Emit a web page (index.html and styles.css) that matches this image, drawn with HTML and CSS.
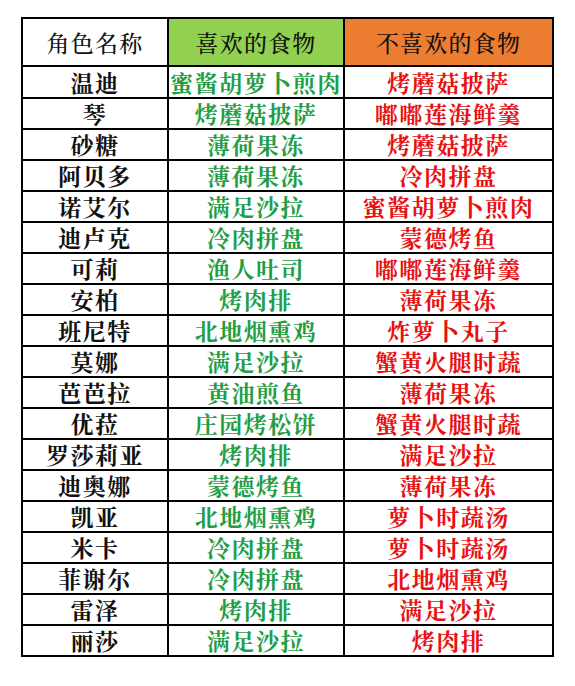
FILE: index.html
```html
<!DOCTYPE html>
<html lang="zh">
<head>
<meta charset="utf-8">
<link rel="stylesheet" href="styles.css">
</head>
<body>
<table class="food">
  <colgroup><col class="c1"><col class="c2"><col class="c3"></colgroup>
  <thead>
    <tr><th class="h-name">角色名称</th><th class="h-like">喜欢的食物</th><th class="h-dislike">不喜欢的食物</th></tr>
  </thead>
  <tbody>
    <tr class="first"><td>温迪</td><td class="like">蜜酱胡萝卜煎肉</td><td class="dislike">烤蘑菇披萨</td></tr>
    <tr><td>琴</td><td class="like">烤蘑菇披萨</td><td class="dislike">嘟嘟莲海鲜羹</td></tr>
    <tr><td>砂糖</td><td class="like">薄荷果冻</td><td class="dislike">烤蘑菇披萨</td></tr>
    <tr><td>阿贝多</td><td class="like">薄荷果冻</td><td class="dislike">冷肉拼盘</td></tr>
    <tr><td>诺艾尔</td><td class="like">满足沙拉</td><td class="dislike">蜜酱胡萝卜煎肉</td></tr>
    <tr><td>迪卢克</td><td class="like">冷肉拼盘</td><td class="dislike">蒙德烤鱼</td></tr>
    <tr><td>可莉</td><td class="like">渔人吐司</td><td class="dislike">嘟嘟莲海鲜羹</td></tr>
    <tr><td>安柏</td><td class="like">烤肉排</td><td class="dislike">薄荷果冻</td></tr>
    <tr><td>班尼特</td><td class="like">北地烟熏鸡</td><td class="dislike">炸萝卜丸子</td></tr>
    <tr><td>莫娜</td><td class="like">满足沙拉</td><td class="dislike">蟹黄火腿时蔬</td></tr>
    <tr><td>芭芭拉</td><td class="like">黄油煎鱼</td><td class="dislike">薄荷果冻</td></tr>
    <tr><td>优菈</td><td class="like">庄园烤松饼</td><td class="dislike">蟹黄火腿时蔬</td></tr>
    <tr><td>罗莎莉亚</td><td class="like">烤肉排</td><td class="dislike">满足沙拉</td></tr>
    <tr><td>迪奥娜</td><td class="like">蒙德烤鱼</td><td class="dislike">薄荷果冻</td></tr>
    <tr><td>凯亚</td><td class="like">北地烟熏鸡</td><td class="dislike">萝卜时蔬汤</td></tr>
    <tr><td>米卡</td><td class="like">冷肉拼盘</td><td class="dislike">萝卜时蔬汤</td></tr>
    <tr><td>菲谢尔</td><td class="like">冷肉拼盘</td><td class="dislike">北地烟熏鸡</td></tr>
    <tr><td>雷泽</td><td class="like">烤肉排</td><td class="dislike">满足沙拉</td></tr>
    <tr><td>丽莎</td><td class="like">满足沙拉</td><td class="dislike">烤肉排</td></tr>
  </tbody>
</table>
</body>
</html>
```

FILE: styles.css
```css
html, body {
  margin: 0;
  padding: 0;
  background: #ffffff;
}
body {
  padding: 17px 0 0 21px;
  font-family: "Noto Serif CJK SC", "Noto Sans CJK SC", serif;
}
.food {
  border-collapse: collapse;
  table-layout: fixed;
  width: 531px;
  border: 2px solid #000;
}
.c1 { width: 146px; }
.c2 { width: 176px; }
.c3 { width: 209px; }
.food th, .food td {
  border: 2px solid #000;
  padding: 0;
  text-align: center;
  font-size: 23px;
  letter-spacing: 1.5px;
  font-weight: 700;
  line-height: 1;
  color: #111;
  white-space: nowrap;
  overflow: hidden;
}
.food th {
  height: 46px;
  font-weight: 500;
  letter-spacing: 1.2px;
}
.food td {
  height: 29px;
}
.food tr.first td { height: 30px; }
.h-name { background: #ffffff; }
.h-like { background: #92d050; }
.h-dislike { background: #ed7d31; }
.food td.like { color: #1f9e45; }
.food td.dislike { color: #e81010; }
```
